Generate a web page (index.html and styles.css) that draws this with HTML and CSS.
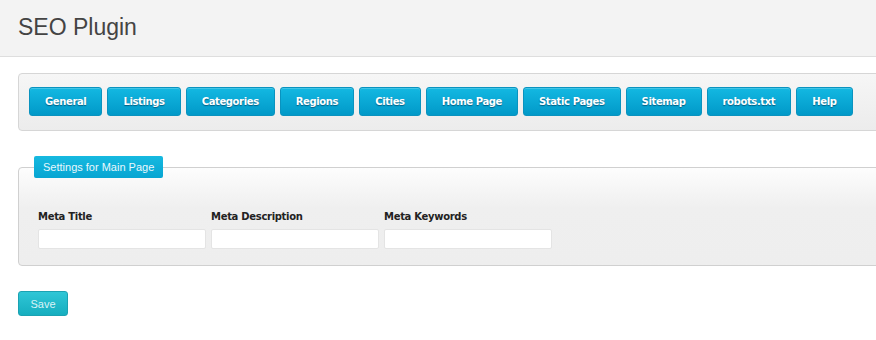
FILE: index.html
```html
<!DOCTYPE html>
<html>
<head>
<meta charset="utf-8">
<title>SEO Plugin</title>
<link rel="stylesheet" href="styles.css">
</head>
<body>
<header class="page-header">
  <h1 class="page-title">SEO Plugin</h1>
</header>
<main class="content">
  <nav class="toolbar">
    <a class="tab-btn" href="#">General</a>
    <a class="tab-btn" href="#">Listings</a>
    <a class="tab-btn" href="#">Categories</a>
    <a class="tab-btn" href="#">Regions</a>
    <a class="tab-btn" href="#">Cities</a>
    <a class="tab-btn" href="#">Home Page</a>
    <a class="tab-btn" href="#">Static Pages</a>
    <a class="tab-btn" href="#">Sitemap</a>
    <a class="tab-btn" href="#">robots.txt</a>
    <a class="tab-btn" href="#">Help</a>
  </nav>
  <form class="settings-form">
    <fieldset class="settings">
      <legend class="settings-legend">Settings for Main Page</legend>
      <div class="fields">
        <label class="field">
          <span class="field-label">Meta Title</span>
          <input class="field-input" type="text">
        </label>
        <label class="field">
          <span class="field-label">Meta Description</span>
          <input class="field-input" type="text">
        </label>
        <label class="field">
          <span class="field-label">Meta Keywords</span>
          <input class="field-input" type="text">
        </label>
      </div>
    </fieldset>
    <button class="save-btn" type="button">Save</button>
  </form>
</main>
</body>
</html>
```
FILE: styles.css
```css
html, body {
  margin: 0;
  padding: 0;
  background: #ffffff;
  overflow: hidden;
}
body {
  font-family: "Liberation Sans", Arial, sans-serif;
  color: #333;
}
.page-header {
  height: 56px;
  background: #f3f3f3;
  border-bottom: 1px solid #dedede;
  display: flex;
  align-items: center;
  padding-left: 18px;
}
.page-title {
  margin: 0;
  font-size: 23px;
  font-weight: normal;
  color: #444;
  padding-bottom: 1px;
}
.content {
  padding: 16px 0 0 18px;
}
.toolbar {
  display: flex;
  gap: 5px;
  margin-right: -20px;
  padding: 13px 10px 14px 10px;
  background: linear-gradient(#f6f6f6, #ececec);
  border: 1px solid #d6d6d6;
  border-radius: 4px;
}
.tab-btn {
  display: flex;
  align-items: center;
  height: 27px;
  padding: 0 15px;
  font-family: "DejaVu Sans", Verdana, sans-serif;
  font-weight: bold;
  font-size: 10px;
  letter-spacing: -0.37px;
  color: #fff;
  text-decoration: none;
  text-shadow: 0 1px 1px rgba(0, 50, 80, 0.6);
  background: linear-gradient(#13b8e2, #0199c8);
  border: 1px solid #0a93bf;
  border-radius: 3px;
  box-shadow: inset 0 1px 0 rgba(255, 255, 255, 0.2);
}
.settings-form {
  margin-top: 25px;
}
.settings {
  margin: 0 -20px 0 0;
  padding: 32px 0 16px 19px;
  border: 1px solid #d0d0d0;
  border-radius: 4px 0 0 4px;
  background: linear-gradient(#fdfdfd 0, #efefef 40px, #eeeeee 100%);
}
.settings-legend {
  margin-left: -4px;
  padding: 0 9px;
  height: 22px;
  line-height: 22px;
  font-size: 11px;
  color: #e8f8fd;
  background: linear-gradient(#16b9e0, #07a5d2);
  border-radius: 2px;
}
.fields {
  display: flex;
  gap: 5px;
}
.field {
  display: flex;
  flex-direction: column;
  gap: 5px;
}
.field-label {
  font-family: "DejaVu Sans", Verdana, sans-serif;
  font-weight: bold;
  font-size: 10px;
  letter-spacing: -0.3px;
  line-height: 14px;
  color: #222;
}
.field-input {
  box-sizing: border-box;
  width: 168px;
  height: 20px;
  margin: 0;
  border: 1px solid #e4e4e4;
  border-radius: 2px;
  background: #fff;
}
.save-btn {
  margin-top: 25px;
  width: 50px;
  height: 25px;
  padding: 0;
  font-family: "Liberation Sans", Arial, sans-serif;
  font-size: 11px;
  color: #d9f3f7;
  background: linear-gradient(#2fc6d6, #16aebf);
  border: 1px solid #1ba2b2;
  border-radius: 3px;
}
```
